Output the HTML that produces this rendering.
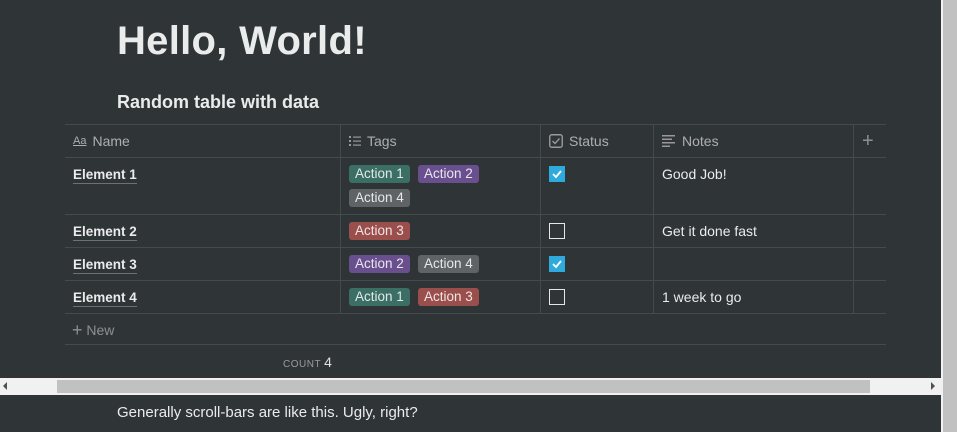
<!DOCTYPE html>
<html><head><meta charset="utf-8"><style>
*{margin:0;padding:0;box-sizing:border-box}
body{width:957px;height:432px;background:#2f3437;overflow:hidden;position:relative;font-family:"Liberation Sans",sans-serif;color:rgba(255,255,255,.9)}
.abs{position:absolute}
h1{position:absolute;left:117px;top:19px;font-size:40px;font-weight:bold;letter-spacing:0.3px}
h2{position:absolute;left:117px;top:92px;font-size:18px;font-weight:bold}
.hl{position:absolute;left:65px;width:821px;height:1px;background:#454a4d}
.vl{position:absolute;top:124px;height:189px;width:1px;background:#454a4d}
.th{position:absolute;top:133px;font-size:14px;color:rgba(255,255,255,.6);display:flex;align-items:center;gap:6px}
.nm{position:absolute;left:73px;font-size:13.5px;font-weight:bold;border-bottom:1px solid rgba(255,255,255,.3);line-height:16px}
.tag{position:absolute;height:18px;line-height:18px;padding:0 6px;border-radius:3px;font-size:13.5px;color:rgba(255,255,255,.85)}
.g{background:#3b6e64}.p{background:#6a4f8f}.r{background:#9a4f4c}.gr{background:#5f6366}
.cb{position:absolute;left:549px;width:16px;height:16px}
.cb.on{background:#2eaadc}
.cb.off{border:1.5px solid #e6e6e6}
.note{position:absolute;left:662px;font-size:14px}
</style></head><body>
<h1>Hello, World!</h1>
<h2>Random table with data</h2>
<div class="hl" style="top:124px"></div>
<div class="hl" style="top:157px"></div>
<div class="hl" style="top:214px"></div>
<div class="hl" style="top:247px"></div>
<div class="hl" style="top:280px"></div>
<div class="hl" style="top:313px"></div>
<div class="hl" style="top:344px"></div>
<div class="vl" style="left:340px"></div>
<div class="vl" style="left:540px"></div>
<div class="vl" style="left:653px"></div>
<div class="vl" style="left:853px"></div>

<div class="th" style="left:73px"><span style="font-size:11px;text-decoration:underline">Aa</span>Name</div>
<div class="th" style="left:349px"><svg width="12" height="10"><g fill="#999"><rect x="0" y="0" width="2" height="2"/><rect x="0" y="4" width="2" height="2"/><rect x="0" y="8" width="2" height="2"/><rect x="4" y="0.5" width="8" height="1.2"/><rect x="4" y="4.5" width="8" height="1.2"/><rect x="4" y="8.5" width="8" height="1.2"/></g></svg>Tags</div>
<div class="th" style="left:549px"><svg width="14" height="14"><rect x="0.75" y="0.75" width="12.5" height="12.5" rx="2" fill="none" stroke="#999" stroke-width="1.4"/><path d="M3.5 7l2.5 2.5 4.5-5" fill="none" stroke="#999" stroke-width="1.4"/></svg>Status</div>
<div class="th" style="left:662px"><svg width="14" height="12"><g fill="#999"><rect x="0" y="0" width="13" height="1.5"/><rect x="0" y="3.5" width="10" height="1.5"/><rect x="0" y="7" width="13" height="1.5"/><rect x="0" y="10.5" width="8" height="1.5"/></g></svg>Notes</div>
<div class="abs" style="left:862px;top:130px;font-size:20px;color:rgba(255,255,255,.45)">+</div>

<div class="nm" style="top:167px">Element 1</div>
<div class="nm" style="top:224px">Element 2</div>
<div class="nm" style="top:257px">Element 3</div>
<div class="nm" style="top:290px">Element 4</div>

<div class="tag g" style="left:349px;top:165px">Action 1</div>
<div class="tag p" style="left:418px;top:165px">Action 2</div>
<div class="tag gr" style="left:349px;top:189px">Action 4</div>
<div class="tag r" style="left:349px;top:222px">Action 3</div>
<div class="tag p" style="left:349px;top:255px">Action 2</div>
<div class="tag gr" style="left:418px;top:255px">Action 4</div>
<div class="tag g" style="left:349px;top:288px">Action 1</div>
<div class="tag r" style="left:418px;top:288px">Action 3</div>

<div class="cb on" style="top:166px"><svg width="16" height="16"><path d="M4 8l3 3 5-6" fill="none" stroke="#fff" stroke-width="1.8"/></svg></div>
<div class="cb off" style="top:223px"></div>
<div class="cb on" style="top:256px"><svg width="16" height="16"><path d="M4 8l3 3 5-6" fill="none" stroke="#fff" stroke-width="1.8"/></svg></div>
<div class="cb off" style="top:289px"></div>

<div class="note" style="top:166px">Good Job!</div>
<div class="note" style="top:223px">Get it done fast</div>
<div class="note" style="top:289px">1 week to go</div>

<div class="abs" style="left:72px;top:320px;font-size:14px;color:rgba(255,255,255,.45)"><span style="font-size:18px;vertical-align:-1px">+</span> New</div>
<div class="abs" style="left:283px;top:354px;font-size:10px;color:rgba(255,255,255,.5);letter-spacing:.5px">COUNT <span style="font-size:14px;color:rgba(255,255,255,.85)">4</span></div>

<div class="abs" style="left:0;top:378px;width:941px;height:17px;background:#f1f1f1"></div>
<div class="abs" style="left:57px;top:380px;width:813px;height:13px;background:#c1c1c1"></div>
<div class="abs" style="left:3px;top:382px;width:0;height:0;border-top:4px solid transparent;border-bottom:4px solid transparent;border-right:4px solid #505050"></div>
<div class="abs" style="left:931px;top:382px;width:0;height:0;border-top:4px solid transparent;border-bottom:4px solid transparent;border-left:4px solid #505050"></div>

<div class="abs" style="left:117px;top:404px;font-size:15px">Generally scroll-bars are like this. Ugly, right?</div>

<div class="abs" style="left:941px;top:0;width:16px;height:432px;background:#f1f1f1"></div>
<div class="abs" style="left:943px;top:0;width:14px;height:432px;background:#c1c1c1"></div>
</body></html>
